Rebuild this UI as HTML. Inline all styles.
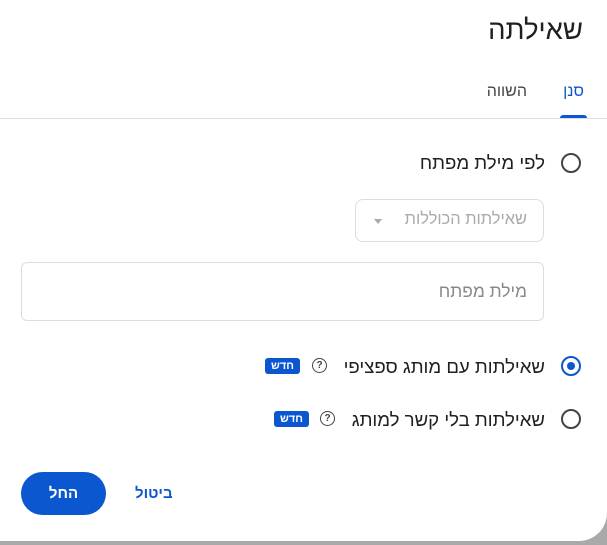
<!DOCTYPE html>
<html dir="rtl"><head><meta charset="utf-8"><style>
body{margin:0;width:607px;height:545px;background:#a9a9a9;overflow:hidden;font-family:"Liberation Sans","Noto Sans CJK JP",sans-serif;position:relative}
.d{position:absolute;left:0;top:0;width:607px;height:541px;background:#fff;border-radius:0 0 28px 0}
.a{position:absolute;white-space:nowrap}
.r{position:absolute;width:20px;height:20px;border:2px solid #444;border-radius:50%;box-sizing:border-box}
.b{position:absolute;background:#0b57d0;color:#fff;font-size:11px;font-weight:bold;border-radius:3px;height:16px;line-height:16px;text-align:center;width:35px}
.q{position:absolute;width:13px;height:13px;border:1.5px solid #444;border-radius:50%;font-size:10px;font-weight:bold;line-height:13px;text-align:center;color:#444}
</style></head><body><div class="d">
<div class="a" style="right:24px;top:14px;font-size:27.5px;color:#1f1f1f">שאילתה</div>
<div class="a" style="right:23px;top:83px;font-size:16px;color:#0b57d0">סנן</div>
<div style="position:absolute;left:560px;top:115px;width:27px;height:3px;background:#0b57d0;border-radius:3px 3px 0 0"></div>
<div class="a" style="right:80px;top:83px;font-size:16px;color:#444">השווה</div>
<div style="position:absolute;left:0;top:118px;width:607px;height:1px;background:#ddd"></div>
<div class="r" style="left:561px;top:153px"></div>
<div class="a" style="right:62px;top:152px;font-size:18.6px;color:#1f1f1f">לפי מילת מפתח</div>
<div style="position:absolute;left:355px;top:199px;width:189px;height:43px;border:1px solid #ddd;border-radius:8px;box-sizing:border-box"></div>
<div class="a" style="right:80px;top:210px;font-size:16.4px;color:#aaa">שאילתות הכוללות</div>
<div style="position:absolute;left:374px;top:219px;border:4px solid transparent;border-top:5px solid #aaa"></div>
<div style="position:absolute;left:21px;top:262px;width:523px;height:59px;border:1px solid #ddd;border-radius:6px;box-sizing:border-box"></div>
<div class="a" style="right:80px;top:281px;font-size:17.4px;color:#888">מילת מפתח</div>
<div class="r" style="left:561px;top:356px;border-color:#0b57d0"><div style="position:absolute;left:4px;top:4px;width:8px;height:8px;border-radius:50%;background:#0b57d0"></div></div>
<div class="a" style="right:62px;top:356px;font-size:18.6px;color:#1f1f1f">שאילתות עם מותג ספציפי</div>
<div class="q" style="left:312px;top:358px">?</div>
<div class="b" style="left:265px;top:358px">חדש</div>
<div class="r" style="left:561px;top:409px"></div>
<div class="a" style="right:62px;top:409px;font-size:18.6px;color:#1f1f1f">שאילתות בלי קשר למותג</div>
<div class="q" style="left:320px;top:411px">?</div>
<div class="b" style="left:274px;top:411px">חדש</div>
<div style="position:absolute;left:21px;top:472px;width:85px;height:43px;border-radius:22px;background:#0b57d0;color:#fff;font-weight:bold;font-size:15px;line-height:43px;text-align:center">החל</div>
<div class="a" style="left:135px;top:485px;font-size:15px;font-weight:bold;color:#0b57d0">ביטול</div>
</div></body></html>
